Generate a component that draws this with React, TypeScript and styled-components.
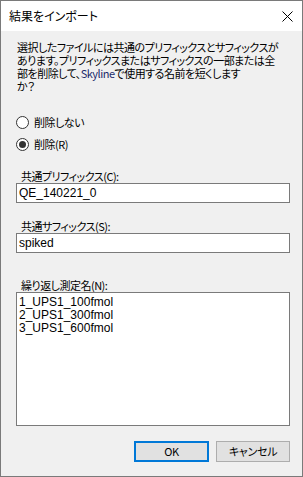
import React from 'react';
import styled, { createGlobalStyle } from 'styled-components';

const GlobalStyle = createGlobalStyle`
  html, body {
    margin: 0;
    padding: 0;
    background: #f0f0f0;
  }
  * {
    box-sizing: border-box;
  }
`;

const jpFont = `"Noto Sans CJK JP", "Noto Sans", sans-serif`;
const latinFont = `"Liberation Sans", Arial, sans-serif`;

const Window = styled.div`
  width: 303px;
  height: 477px;
  border: 1px solid #7a7a7a;
  background: #f0f0f0;
  display: flex;
  flex-direction: column;
  font-family: ${jpFont};
  font-size: 11px;
  letter-spacing: -0.5px;
  font-feature-settings: 'palt';
  color: #000;
`;

const TitleBar = styled.div`
  height: 30px;
  background: #fff;
  display: flex;
  align-items: center;
  justify-content: space-between;
  padding: 0 9px 0 8px;
  flex-shrink: 0;
`;

const Title = styled.span`
  font-size: 12px;
  letter-spacing: 0;
  line-height: 14px;
`;

const Body = styled.div`
  padding: 0 12px 0 15px;
  display: flex;
  flex-direction: column;
`;

const Message = styled.p`
  margin: 10px 0 0 1px;
  line-height: 13px;
  white-space: nowrap;
`;

const Brand = styled.span`
  color: #1c2a6b;
`;

const RadioGroup = styled.div`
  margin-top: 18px;
  display: flex;
  flex-direction: column;
`;

const RadioRow = styled.label`
  height: 22px;
  display: flex;
  align-items: center;
  gap: 5px;
`;

const RadioCircle = styled.span<{ $checked?: boolean }>`
  width: 13px;
  height: 13px;
  border-radius: 50%;
  border: 1px solid #333;
  background: #fff;
  display: flex;
  align-items: center;
  justify-content: center;
  flex-shrink: 0;

  &::after {
    content: '';
    width: 7px;
    height: 7px;
    border-radius: 50%;
    background: ${(p) => (p.$checked ? '#333' : 'transparent')};
  }
`;

const FieldLabel = styled.div<{ $gap: number }>`
  margin-top: ${(p) => p.$gap}px;
  padding-left: 5px;
  line-height: 14px;
  height: 14px;
`;

const TextBox = styled.div`
  height: 20px;
  border: 1px solid #7a7a7a;
  background: #fff;
  padding-left: 2px;
  font-family: ${latinFont};
  font-size: 12px;
  letter-spacing: 0;
  line-height: 18px;
`;

const ListBox = styled.div`
  height: 134px;
  border: 1px solid #7a7a7a;
  background: #fff;
  padding: 3px 0 0 2px;
  font-family: ${latinFont};
  font-size: 12px;
  letter-spacing: 0;
  line-height: 13px;
`;

const ListItem = styled.div`
  height: 13px;
`;

const ButtonRow = styled.div`
  margin-top: 15px;
  display: flex;
  justify-content: flex-end;
  gap: 7px;
`;

const Button = styled.button<{ $default?: boolean }>`
  width: ${(p) => (p.$default ? 75 : 74)}px;
  height: 21px;
  padding: 0;
  background: #e1e1e1;
  border: ${(p) => (p.$default ? '2px solid #0078d7' : '1px solid #adadad')};
  font-family: ${jpFont};
  font-feature-settings: 'palt';
  font-size: 11px;
  letter-spacing: -0.3px;
  color: #000;
  line-height: 1;
`;

const CloseIcon = () => (
  <svg width="11" height="11" viewBox="0 0 11 11">
    <path d="M0.5 0.5 L10.5 10.5 M10.5 0.5 L0.5 10.5" stroke="#000" strokeWidth="1" fill="none" />
  </svg>
);

const App = () => {
  return (
    <>
      <GlobalStyle />
      <Window>
        <TitleBar>
          <Title>結果をインポート</Title>
          <CloseIcon />
        </TitleBar>
        <Body>
          <Message>
            選択したファイルには共通のプリフィックスとサフィックスが
            <br />
            あります。プリフィックスまたはサフィックスの一部または全
            <br />
            部を削除して、<Brand>Skyline</Brand>で使用する名前を短くします
            <br />
            か？
          </Message>
          <RadioGroup>
            <RadioRow>
              <RadioCircle />
              削除しない
            </RadioRow>
            <RadioRow>
              <RadioCircle $checked />
              削除(R)
            </RadioRow>
          </RadioGroup>
          <FieldLabel $gap={14}>共通プリフィックス(C):</FieldLabel>
          <TextBox>QE_140221_0</TextBox>
          <FieldLabel $gap={16}>共通サフィックス(S):</FieldLabel>
          <TextBox>spiked</TextBox>
          <FieldLabel $gap={25}>繰り返し測定名(N):</FieldLabel>
          <ListBox>
            <ListItem>1_UPS1_100fmol</ListItem>
            <ListItem>2_UPS1_300fmol</ListItem>
            <ListItem>3_UPS1_600fmol</ListItem>
          </ListBox>
          <ButtonRow>
            <Button $default>OK</Button>
            <Button>キャンセル</Button>
          </ButtonRow>
        </Body>
      </Window>
    </>
  );
};

export default App;
